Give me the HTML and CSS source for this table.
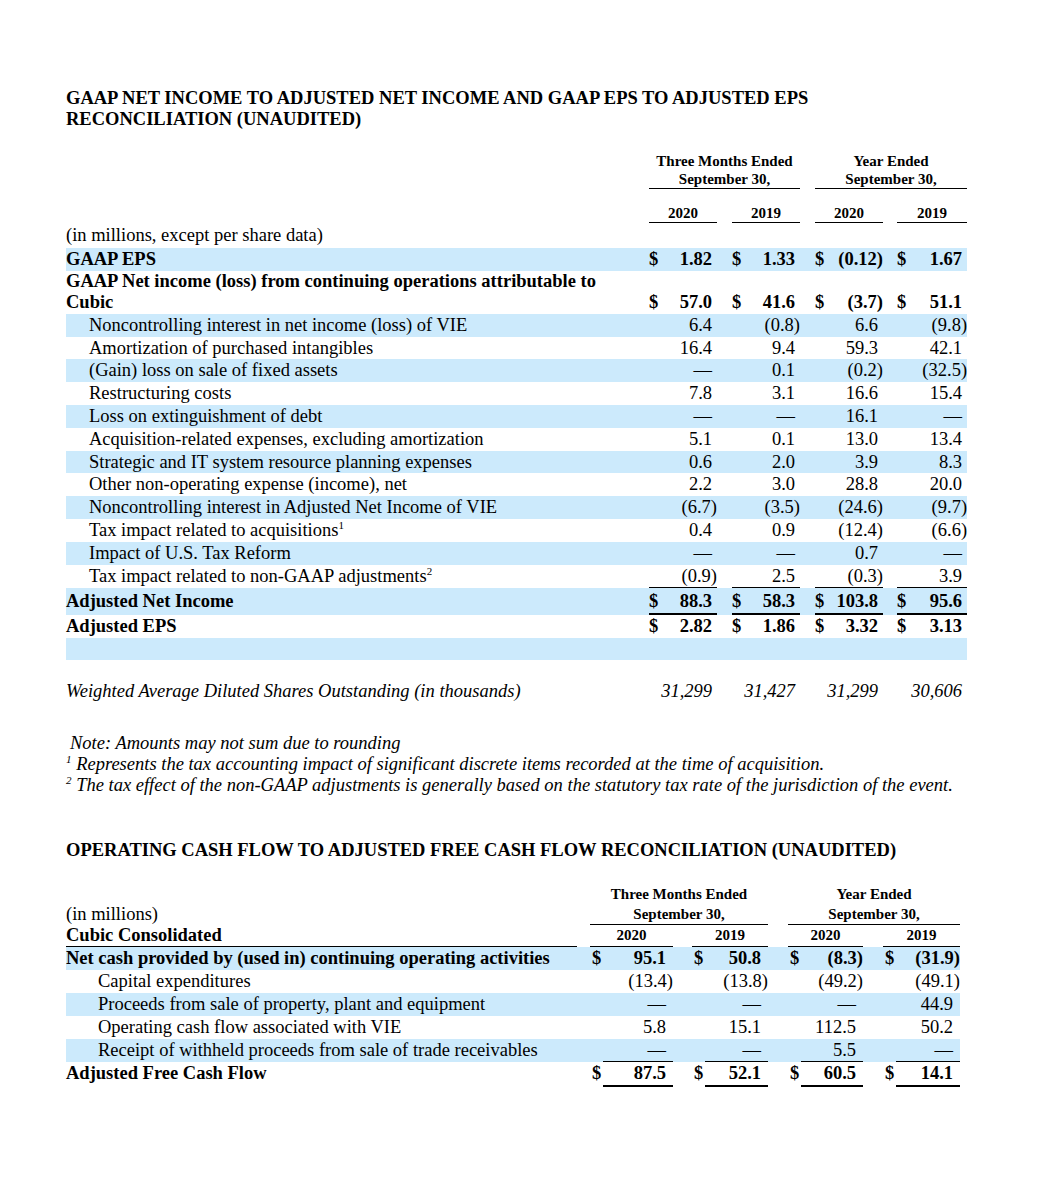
FILE: index.html
```html
<!DOCTYPE html>
<html lang="en">
<head>
<meta charset="utf-8">
<title>Reconciliation</title>
<link rel="stylesheet" href="styles.css">
</head>
<body>
<div class="page">
  <h1 class="title">GAAP NET INCOME TO ADJUSTED NET INCOME AND GAAP EPS TO ADJUSTED EPS<br>RECONCILIATION (UNAUDITED)</h1>

  <table class="t1">
    <colgroup>
      <col class="w-label"><col class="w-c"><col class="w-g"><col class="w-c"><col class="w-g"><col class="w-c"><col class="w-g2"><col class="w-c4">
    </colgroup>
    <tr class="hd1">
      <td></td>
      <td colspan="3" class="u">Three Months Ended<br>September 30,</td>
      <td></td>
      <td colspan="3" class="u">Year Ended<br>September 30,</td>
    </tr>
    <tr class="hd2">
      <td></td>
      <td class="u">2020</td><td></td><td class="u">2019</td><td></td><td class="u">2020</td><td></td><td class="u">2019</td>
    </tr>
    <tr class="units"><td class="lbl">(in millions, except per share data)</td><td></td><td></td><td></td><td></td><td></td><td></td><td></td></tr>
    <tr class="b bold">
      <td class="lbl">GAAP EPS</td>
      <td class="n"><span class="cur">$</span>1.82</td><td></td>
      <td class="n"><span class="cur">$</span>1.33</td><td></td>
      <td class="n"><span class="cur">$</span><span class="neg">(0.12)</span></td><td></td>
      <td class="n"><span class="cur">$</span>1.67</td>
    </tr>
    <tr class="bold two">
      <td class="lbl">GAAP Net income (loss) from continuing operations attributable to<br>Cubic</td>
      <td class="n"><span class="cur">$</span>57.0</td><td></td>
      <td class="n"><span class="cur">$</span>41.6</td><td></td>
      <td class="n"><span class="cur">$</span><span class="neg">(3.7)</span></td><td></td>
      <td class="n"><span class="cur">$</span>51.1</td>
    </tr>
    <tr class="b">
      <td class="lbl ind">Noncontrolling interest in net income (loss) of VIE</td>
      <td class="n">6.4</td><td></td><td class="n"><span class="neg">(0.8)</span></td><td></td><td class="n">6.6</td><td></td><td class="n"><span class="neg">(9.8)</span></td>
    </tr>
    <tr>
      <td class="lbl ind">Amortization of purchased intangibles</td>
      <td class="n">16.4</td><td></td><td class="n">9.4</td><td></td><td class="n">59.3</td><td></td><td class="n">42.1</td>
    </tr>
    <tr class="b">
      <td class="lbl ind">(Gain) loss on sale of fixed assets</td>
      <td class="n">—</td><td></td><td class="n">0.1</td><td></td><td class="n"><span class="neg">(0.2)</span></td><td></td><td class="n"><span class="neg">(32.5)</span></td>
    </tr>
    <tr>
      <td class="lbl ind">Restructuring costs</td>
      <td class="n">7.8</td><td></td><td class="n">3.1</td><td></td><td class="n">16.6</td><td></td><td class="n">15.4</td>
    </tr>
    <tr class="b">
      <td class="lbl ind">Loss on extinguishment of debt</td>
      <td class="n">—</td><td></td><td class="n">—</td><td></td><td class="n">16.1</td><td></td><td class="n">—</td>
    </tr>
    <tr>
      <td class="lbl ind">Acquisition-related expenses, excluding amortization</td>
      <td class="n">5.1</td><td></td><td class="n">0.1</td><td></td><td class="n">13.0</td><td></td><td class="n">13.4</td>
    </tr>
    <tr class="b">
      <td class="lbl ind">Strategic and IT system resource planning expenses</td>
      <td class="n">0.6</td><td></td><td class="n">2.0</td><td></td><td class="n">3.9</td><td></td><td class="n">8.3</td>
    </tr>
    <tr>
      <td class="lbl ind">Other non-operating expense (income), net</td>
      <td class="n">2.2</td><td></td><td class="n">3.0</td><td></td><td class="n">28.8</td><td></td><td class="n">20.0</td>
    </tr>
    <tr class="b">
      <td class="lbl ind">Noncontrolling interest in Adjusted Net Income of VIE</td>
      <td class="n"><span class="neg">(6.7)</span></td><td></td><td class="n"><span class="neg">(3.5)</span></td><td></td><td class="n"><span class="neg">(24.6)</span></td><td></td><td class="n"><span class="neg">(9.7)</span></td>
    </tr>
    <tr>
      <td class="lbl ind">Tax impact related to acquisitions<sup>1</sup></td>
      <td class="n">0.4</td><td></td><td class="n">0.9</td><td></td><td class="n"><span class="neg">(12.4)</span></td><td></td><td class="n"><span class="neg">(6.6)</span></td>
    </tr>
    <tr class="b">
      <td class="lbl ind">Impact of U.S. Tax Reform</td>
      <td class="n">—</td><td></td><td class="n">—</td><td></td><td class="n">0.7</td><td></td><td class="n">—</td>
    </tr>
    <tr>
      <td class="lbl ind">Tax impact related to non-GAAP adjustments<sup>2</sup></td>
      <td class="n u"><span class="neg">(0.9)</span></td><td></td><td class="n u">2.5</td><td></td><td class="n u"><span class="neg">(0.3)</span></td><td></td><td class="n u">3.9</td>
    </tr>
    <tr class="b bold total">
      <td class="lbl">Adjusted Net Income</td>
      <td class="n uu"><span class="cur">$</span>88.3</td><td></td>
      <td class="n uu"><span class="cur">$</span>58.3</td><td></td>
      <td class="n uu"><span class="cur">$</span>103.8</td><td></td>
      <td class="n uu"><span class="cur">$</span>95.6</td>
    </tr>
    <tr class="bold">
      <td class="lbl">Adjusted EPS</td>
      <td class="n"><span class="cur">$</span>2.82</td><td></td>
      <td class="n"><span class="cur">$</span>1.86</td><td></td>
      <td class="n"><span class="cur">$</span>3.32</td><td></td>
      <td class="n"><span class="cur">$</span>3.13</td>
    </tr>
    <tr class="b empty"><td></td><td></td><td></td><td></td><td></td><td></td><td></td><td></td></tr>
    <tr class="spacer"><td></td><td></td><td></td><td></td><td></td><td></td><td></td><td></td></tr>
    <tr class="ital">
      <td class="lbl">Weighted Average Diluted Shares Outstanding (in thousands)</td>
      <td class="n">31,299</td><td></td><td class="n">31,427</td><td></td><td class="n">31,299</td><td></td><td class="n">30,606</td>
    </tr>
  </table>

  <div class="notes">
    <p class="note">Note: Amounts may not sum due to rounding</p>
    <p><sup>1</sup> Represents the tax accounting impact of significant discrete items recorded at the time of acquisition.</p>
    <p><sup>2</sup> The tax effect of the non-GAAP adjustments is generally based on the statutory tax rate of the jurisdiction of the event.</p>
  </div>

  <h2 class="title title2">OPERATING CASH FLOW TO ADJUSTED FREE CASH FLOW RECONCILIATION (UNAUDITED)</h2>

  <table class="t2">
    <colgroup>
      <col class="x-label"><col class="x-g1"><col class="x-d"><col class="x-v1"><col class="x-g2"><col class="x-d"><col class="x-v2"><col class="x-g3"><col class="x-d"><col class="x-v3"><col class="x-g3"><col class="x-d"><col class="x-v4">
    </colgroup>
    <tr class="ha">
      <td></td><td></td>
      <td colspan="5" class="hc">Three Months Ended</td>
      <td></td>
      <td colspan="5" class="hc">Year Ended</td>
    </tr>
    <tr class="hb">
      <td class="lbl">(in millions)</td><td></td>
      <td colspan="5" class="hc u">September 30,</td>
      <td></td>
      <td colspan="5" class="hc u">September 30,</td>
    </tr>
    <tr class="hcr">
      <td class="lbl bold u">Cubic Consolidated</td><td></td>
      <td colspan="2" class="hc u">2020</td><td></td>
      <td colspan="2" class="hc u">2019</td><td></td>
      <td colspan="2" class="hc u">2020</td><td></td>
      <td colspan="2" class="hc u">2019</td>
    </tr>
    <tr class="b bold">
      <td class="lbl">Net cash provided by (used in) continuing operating activities</td><td></td>
      <td class="d">$</td><td class="v">95.1</td><td></td>
      <td class="d">$</td><td class="v">50.8</td><td></td>
      <td class="d">$</td><td class="v"><span class="neg">(8.3)</span></td><td></td>
      <td class="d">$</td><td class="v"><span class="neg">(31.9)</span></td>
    </tr>
    <tr>
      <td class="lbl ind2">Capital expenditures</td><td></td>
      <td></td><td class="v"><span class="neg">(13.4)</span></td><td></td>
      <td></td><td class="v"><span class="neg">(13.8)</span></td><td></td>
      <td></td><td class="v"><span class="neg">(49.2)</span></td><td></td>
      <td></td><td class="v"><span class="neg">(49.1)</span></td>
    </tr>
    <tr class="b">
      <td class="lbl ind2">Proceeds from sale of property, plant and equipment</td><td></td>
      <td></td><td class="v">—</td><td></td>
      <td></td><td class="v">—</td><td></td>
      <td></td><td class="v">—</td><td></td>
      <td></td><td class="v">44.9</td>
    </tr>
    <tr>
      <td class="lbl ind2">Operating cash flow associated with VIE</td><td></td>
      <td></td><td class="v">5.8</td><td></td>
      <td></td><td class="v">15.1</td><td></td>
      <td></td><td class="v">112.5</td><td></td>
      <td></td><td class="v">50.2</td>
    </tr>
    <tr class="b">
      <td class="lbl ind2">Receipt of withheld proceeds from sale of trade receivables</td><td></td>
      <td></td><td class="v u">—</td><td></td>
      <td></td><td class="v u">—</td><td></td>
      <td></td><td class="v u">5.5</td><td></td>
      <td></td><td class="v u">—</td>
    </tr>
    <tr class="bold">
      <td class="lbl">Adjusted Free Cash Flow</td><td></td>
      <td class="d">$</td><td class="v uu">87.5</td><td></td>
      <td class="d">$</td><td class="v uu">52.1</td><td></td>
      <td class="d">$</td><td class="v uu">60.5</td><td></td>
      <td class="d">$</td><td class="v uu">14.1</td>
    </tr>
  </table>
</div>
</body>
</html>
```
FILE: styles.css
```css
html, body {
  margin: 0;
  padding: 0;
  background: #ffffff;
}

.page {
  padding: 88px 0 40px 66px;
  font-family: "Liberation Serif", "Times New Roman", Times, serif;
  font-size: 18.5px;
  color: #000000;
}

.title {
  font-size: 18.5px;
  font-weight: bold;
  line-height: 21px;
  margin: 0 0 23px 0;
}

.title2 {
  margin: 44px 0 23px 0;
}

table {
  border-collapse: separate;
  border-spacing: 0;
  table-layout: fixed;
}

td {
  padding: 0;
  white-space: nowrap;
  vertical-align: top;
  line-height: 22.8px;
}

.bold td,
td.bold {
  font-weight: bold;
}

.b td {
  background: #cceafc;
}

.u {
  border-bottom: 1px solid #000;
}

.uu {
  border-bottom: 2px solid #000;
}

.ind {
  padding-left: 23px;
}

.ind2 {
  padding-left: 32px;
}

sup {
  font-size: 11px;
  line-height: 0;
  vertical-align: 7px;
}

/* ---------- Table 1 ---------- */
.t1 {
  width: 901px;
}

.w-label { width: 583px; }
.w-c { width: 68px; }
.w-g { width: 15px; }
.w-g2 { width: 14px; }
.w-c4 { width: 70px; }

.t1 .hd1 td {
  font-size: 15px;
  font-weight: bold;
  line-height: 17.5px;
  text-align: center;
}

.t1 .hd2 td {
  font-size: 15px;
  font-weight: bold;
  line-height: 18px;
  padding-top: 15px;
  text-align: center;
}

.t1 .units td {
  line-height: 25px;
}

.t1 .two td {
  line-height: 21.5px;
}

.t1 .total td {
  line-height: 23px;
  padding-top: 1.5px;
}

.t1 .n {
  text-align: right;
  padding-right: 5px;
}

.t1 .neg {
  margin-right: -5px;
}

.cur {
  float: left;
}

.t1 .two td.n {
  vertical-align: bottom;
}

.t1 .empty td {
  height: 22px;
}

.t1 .spacer td {
  height: 20px;
}

.ital td {
  font-style: italic;
}

/* ---------- Notes ---------- */
.notes {
  margin-top: 31px;
  font-style: italic;
  font-size: 18.5px;
}

.notes p {
  margin: 0;
  line-height: 21px;
}

.notes .note {
  padding-left: 4px;
}

/* ---------- Table 2 ---------- */
.t2 {
  width: 894px;
}

.x-label { width: 511px; }
.x-g1 { width: 13px; }
.x-d { width: 13px; }
.x-v1 { width: 70px; }
.x-g2 { width: 19px; }
.x-v2 { width: 63px; }
.x-g3 { width: 20px; }
.x-v3 { width: 62px; }
.x-v4 { width: 64px; }

.t2 .hc {
  font-size: 15px;
  font-weight: bold;
  text-align: center;
}

.t2 .ha td {
  line-height: 20px;
}

.t2 .hb td {
  line-height: 20px;
}

.t2 .hcr td {
  line-height: 21px;
}

.t2 .d {
  text-align: left;
  padding-left: 2px;
}

.t2 .v {
  text-align: right;
  padding-right: 7px;
}

.t2 .neg {
  margin-right: -7px;
}
```
